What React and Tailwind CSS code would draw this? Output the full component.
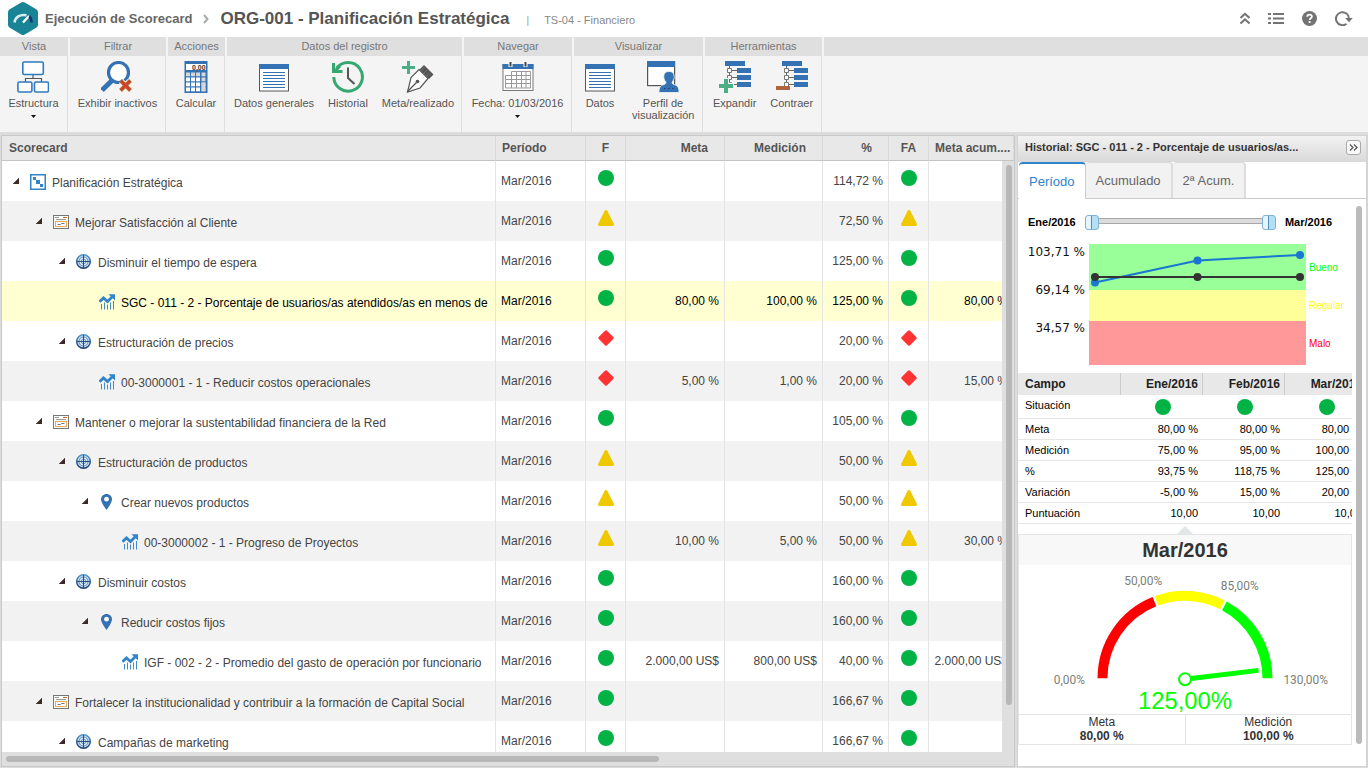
import { useState } from 'react';
import clsx from 'clsx';

/* ---------- Toolbar icons ---------- */

const StructureIcon = () => (
  <svg width="32" height="32" viewBox="0 0 32 32" fill="none">
    <path d="M16 14v4M8.500 21v-3.500h16V21" stroke="#555" strokeWidth="1.200" />
    <rect x="5.800" y="1" width="20.500" height="12.500" rx="1.500" fill="#fff" stroke="#2f7abf" strokeWidth="1.600" />
    <rect x="0.900" y="21" width="14" height="10" rx="1.500" fill="#fff" stroke="#2f7abf" strokeWidth="1.600" />
    <rect x="17.500" y="21" width="14" height="10" rx="1.500" fill="#fff" stroke="#2f7abf" strokeWidth="1.600" />
  </svg>
);

const InactiveIcon = () => (
  <svg width="32" height="32" viewBox="0 0 32 32" fill="none">
    <path d="M11 19.500 2.800 27.500" stroke="#3472b3" strokeWidth="5" strokeLinecap="square" />
    <circle cx="17.500" cy="11.500" r="10" fill="#fff" stroke="#3472b3" strokeWidth="3.200" />
    <path d="m20 20 9 9M29 20l-9 9" stroke="#fff" strokeWidth="6" />
    <path d="m19.500 19.500 10 10M29.500 19.500l-10 10" stroke="#b5632b" strokeWidth="4" />
    <path d="m20 20 9 9M29 20l-9 9" stroke="#d8382c" strokeWidth="1.600" />
  </svg>
);

const CalculatorIcon = () => (
  <svg width="32" height="32" viewBox="0 0 32 32">
    <path d="M4.500 0h23v32h-23z" fill="#3472b3" />
    <path d="M6 3h20v6H6z" fill="#fff" />
    <text x="12" y="8.500" fontSize="7" fontWeight="bold" fontFamily="Liberation Sans, sans-serif" fill="#333">0,00</text>
    {[11.500, 16.500, 21.500, 26.500].map((y, r) =>
      [6, 11, 16, 21.500].map((x) => (
        <rect key={`${x}-${y}`} x={x} y={y} width="4" height="3.800" fill={x === 21.500 || r === 0 ? '#d5d7da' : '#fff'} />
      ))
    )}
    <path d="M21.500 21.500h4v8.800h-4z" fill="#d5d7da" />
  </svg>
);

const FormIcon = () => (
  <svg width="32" height="32" viewBox="0 0 32 32">
    <rect x="1.500" y="4" width="29" height="26" fill="#fff" stroke="#555" />
    <path d="M1 3h30v5H1z" fill="#3472b3" />
    {[11, 14, 17, 20, 23, 26].map((y) => (
      <path key={y} d={`M5 ${y}h22v1H5z`} fill="#3472b3" />
    ))}
  </svg>
);

const HistoryIcon = () => (
  <svg width="34" height="32" viewBox="0 0 34 32" fill="none">
    <path d="M5.500 7.500A14.300 14.300 0 1 1 2.800 16" stroke="#35a871" strokeWidth="3" />
    <path d="M2.500 2v8.500h9" stroke="#35a871" strokeWidth="3" />
    <path d="M3 11 9 5" stroke="#35a871" strokeWidth="3" />
    <path d="M17 6.500V17l6.500 6" stroke="#555" strokeWidth="2" />
  </svg>
);

const PenIcon = () => (
  <svg width="32" height="32" viewBox="0 0 32 32" fill="none">
    <path d="M6.500 0v13M0 6.500h13" stroke="#4bae84" strokeWidth="3" />
    <path d="m17 8.500 9 9L18 27 5.500 31 9 16.500z" fill="#fff" stroke="#555" strokeWidth="1.200" />
    <path d="m5.500 30.500 9-9" stroke="#555" strokeWidth="1.200" />
    <circle cx="15.500" cy="20.500" r="1.800" fill="#555" />
    <path d="m17.500 8.500 4.500-4.500 9.500 9.500-4.500 4.500z" fill="#555" />
    <path d="m18.500 10 4-4m-1.500 7 4-4m-1.500 7 4-4" stroke="#777" strokeWidth=".8" />
  </svg>
);

const CalendarIcon = () => (
  <svg width="32" height="32" viewBox="0 0 32 32" fill="none">
    <rect x="1" y="3.500" width="30" height="26" fill="#fff" stroke="#777" />
    <path d="M.5 3h31v5H.5z" fill="#3472b3" />
    <path d="M8.500 1v5M23.500 1v5" stroke="#fff" strokeWidth="4" />
    <path d="M8.500 1v4.500M23.500 1v4.500" stroke="#444" strokeWidth="2" />
    <path d="M9.500 10.500h19v16.500h-25V14.500h25M3.500 18.500h25M3.500 22.500h25M9.500 10.500V27M14.500 10.500V27M19.500 10.500V27M24 10.500V27" stroke="#999" />
  </svg>
);

const ProfileIcon = () => (
  <svg width="32" height="32" viewBox="0 0 32 32">
    <rect x=".6" y=".6" width="27" height="24" fill="#fff" stroke="#555" strokeWidth="1.200" />
    <path d="M0 0h28v6H0z" fill="#3472b3" />
    <path d="M22 10.500c3.800 0 5.500 2.500 5.200 6-.2 2-1.200 3.500-2.200 4.800.2 1.500 1 2 3 2.600 2.600.8 4 2.400 4 7.600H12c0-5.200 1.400-6.800 4-7.600 2-.6 2.800-1.100 3-2.600-1-1.300-2-2.800-2.200-4.800-.3-3.500 1.400-6 5.200-6z" fill="#3472b3" stroke="#f4f4f4" strokeWidth=".8" />
    <path d="M17 27h1.500v1H17zM21 27h1.500v1H21zM25 27h1.500v1H25z" fill="#1d4676" />
  </svg>
);

const TreeIcon = ({ collapse }) => (
  <svg width="34" height="32" viewBox="0 0 34 32" fill="none">
    <path d="M11.500 5v18M13 9.500h8M13 16.500h8M13 23.500h8" stroke="#666" />
    <path d="M7 0h20v5H7zM19 7h14v5H19zM19 14h14v5H19zM19 21h14v5H19z" fill="#3472b3" />
    <path d="M9.500 7.500h4v4h-4zM9.500 14.500h4v4h-4zM9.500 21.500h4v4h-4z" fill="#fff" stroke="#777" />
    {collapse ? (
      <path d="M1 25h14v4H1z" fill="#b0633c" />
    ) : (
      <>
        <path d="M8 17v15.500M0 24.800h16" stroke="#f4f4f4" strokeWidth="6" />
        <path d="M8 18v14M1 25h14" stroke="#4bae84" strokeWidth="4" />
      </>
    )}
  </svg>
);

const ribbon = [
  { title: 'Vista', width: 'w-[68px]', items: [{ label: 'Estructura', icon: <StructureIcon />, menu: true }] },
  { title: 'Filtrar', width: 'w-24', items: [{ label: 'Exhibir inactivos', icon: <InactiveIcon /> }] },
  { title: 'Acciones', width: 'w-[57px]', items: [{ label: 'Calcular', icon: <CalculatorIcon /> }] },
  {
    title: 'Datos del registro',
    width: 'w-[235px]',
    items: [
      { label: 'Datos generales', icon: <FormIcon /> },
      { label: 'Historial', icon: <HistoryIcon /> },
      { label: 'Meta/realizado', icon: <PenIcon /> },
    ],
  },
  { title: 'Navegar', width: 'w-[108px]', items: [{ label: 'Fecha: 01/03/2016', icon: <CalendarIcon />, menu: true }] },
  {
    title: 'Visualizar',
    width: 'w-[129px]',
    items: [
      { label: 'Datos', icon: <FormIcon /> },
      { label: 'Perfil de visualización', icon: <ProfileIcon />, wrap: true },
    ],
  },
  {
    title: 'Herramientas',
    width: 'w-[117px]',
    items: [
      { label: 'Expandir', icon: <TreeIcon /> },
      { label: 'Contraer', icon: <TreeIcon collapse /> },
    ],
  },
];

/* ---------- Tree icons ---------- */

const nodeIcons = {
  plan: (
    <svg width="16" height="16" viewBox="0 0 16 16">
      <rect x=".75" y=".75" width="14.500" height="14.500" fill="#fff" stroke="#2f84cb" strokeWidth="1.500" />
      <path d="M3 3h3v3H3zM6 6h4v4H6zM10 10h3v3h-3z" fill="#2f84cb" />
    </svg>
  ),
  perspective: (
    <svg width="16" height="16" viewBox="0 0 16 16" fill="none">
      <rect x=".5" y="1.500" width="15" height="13" fill="#fff" stroke="#777" />
      <path d="M2 3.500h4M3 5.500h10" stroke="#999" />
      <path d="M10 3.500h4" stroke="#c0703a" />
      <rect x="2.500" y="7.500" width="11" height="5" fill="#fff" stroke="#eeaa5b" />
      <path d="M4.500 10.500h3l1-1h3" stroke="#777" />
    </svg>
  ),
  objective: (
    <svg width="16" height="16" viewBox="0 0 16 16" fill="none">
      <defs>
        <linearGradient id="target" x1="0" y1="0" x2="0" y2="1">
          <stop offset="0" stopColor="#5b9fd0" />
          <stop offset="1" stopColor="#1d3a78" />
        </linearGradient>
      </defs>
      <circle cx="7.500" cy="7.500" r="6.800" fill="#d4e8f4" stroke="url(#target)" strokeWidth="1.600" />
      <circle cx="7.500" cy="7.500" r="4.600" stroke="#5a86b5" />
      <circle cx="7.500" cy="7.500" r="2.300" stroke="#6c9cc4" />
      <path d="M7.500 1v13M1 7.500h13" stroke="#25508c" />
    </svg>
  ),
  initiative: (
    <svg width="16" height="16" viewBox="0 0 16 16">
      <path d="M7.500 0C10.500 0 13 2.300 13 5.300 13 9 7.500 16 7.500 16S2 9 2 5.300C2 2.300 4.500 0 7.500 0z" fill="#3472b3" />
      <circle cx="7.500" cy="5.200" r="2.400" fill="#fff" />
    </svg>
  ),
  indicator: (
    <svg width="16" height="16" viewBox="0 0 16 16" fill="none">
      <path d="M.5 7.800 4.500 4l4 3.500L13 3" stroke="#2f84cb" strokeWidth="2.800" />
      <path d="M9.500.3H16v6.200z" fill="#2f84cb" />
      <path d="M2.500 10v5.500M5.500 8.500v7M8.500 10.500v5M11.500 8.500v7M14.500 7v8.500" stroke="#3f8ccc" />
    </svg>
  ),
};

const Status = ({ value }) => (
  <svg width="16" height="16" viewBox="0 0 16 16" className="inline-block align-top" role="img" aria-label={value}>
    {value === 'green' && <circle cx="8" cy="8" r="8" fill="#00b344" />}
    {value === 'yellow' && (
      <path d="M8 1.500 14.500 14.500H1.500z" fill="#f0c800" stroke="#f0c800" strokeWidth="3" strokeLinejoin="round" />
    )}
    {value === 'red' && (
      <path d="M8 1.800 14.200 8 8 14.200 1.800 8z" fill="#ff3333" stroke="#ff3333" strokeWidth="3" strokeLinejoin="round" />
    )}
  </svg>
);

const rows = [
  { level: 0, icon: 'plan', name: 'Planificación Estratégica', status: 'green', pct: '114,72 %' },
  { level: 1, icon: 'perspective', name: 'Mejorar Satisfacción al Cliente', status: 'yellow', pct: '72,50 %' },
  { level: 2, icon: 'objective', name: 'Disminuir el tiempo de espera', status: 'green', pct: '125,00 %' },
  { level: 3, icon: 'indicator', name: 'SGC - 011 - 2 - Porcentaje de usuarios/as atendidos/as en menos de', status: 'green', meta: '80,00 %', med: '100,00 %', pct: '125,00 %', acum: '80,00 %', selected: true },
  { level: 2, icon: 'objective', name: 'Estructuración de precios', status: 'red', pct: '20,00 %' },
  { level: 3, icon: 'indicator', name: '00-3000001 - 1 - Reducir costos operacionales', status: 'red', meta: '5,00 %', med: '1,00 %', pct: '20,00 %', acum: '15,00 %' },
  { level: 1, icon: 'perspective', name: 'Mantener o mejorar la sustentabilidad financiera de la Red', status: 'green', pct: '105,00 %' },
  { level: 2, icon: 'objective', name: 'Estructuración de productos', status: 'yellow', pct: '50,00 %' },
  { level: 3, icon: 'initiative', name: 'Crear nuevos productos', status: 'yellow', pct: '50,00 %' },
  { level: 4, icon: 'indicator', name: '00-3000002 - 1 - Progreso de Proyectos', status: 'yellow', meta: '10,00 %', med: '5,00 %', pct: '50,00 %', acum: '30,00 %' },
  { level: 2, icon: 'objective', name: 'Disminuir costos', status: 'green', pct: '160,00 %' },
  { level: 3, icon: 'initiative', name: 'Reducir costos fijos', status: 'green', pct: '160,00 %' },
  { level: 4, icon: 'indicator', name: 'IGF - 002 - 2 - Promedio del gasto de operación por funcionario', status: 'green', meta: '2.000,00 US$', med: '800,00 US$', pct: '40,00 %', acum: '2.000,00 US$' },
  { level: 1, icon: 'perspective', name: 'Fortalecer la institucionalidad y contribuir a la formación de Capital Social', status: 'green', pct: '166,67 %' },
  { level: 2, icon: 'objective', name: 'Campañas de marketing', status: 'green', pct: '166,67 %' },
];

const history = [
  ['Meta', '80,00 %', '80,00 %', '80,00 %'],
  ['Medición', '75,00 %', '95,00 %', '100,00 %'],
  ['%', '93,75 %', '118,75 %', '125,00 %'],
  ['Variación', '-5,00 %', '15,00 %', '20,00 %'],
  ['Puntuación', '10,00', '10,00', '10,00'],
];

const Header = () => (
  <header className="flex h-[37px] shrink-0 items-center bg-white pl-2 pr-[15px] text-[#666]">
    <svg width="30" height="33" viewBox="0 0 30 33" fill="none">
      <path d="M13.200.6a3.600 3.600 0 0 1 3.600 0l11.400 6.600A3.600 3.600 0 0 1 30 10.300v12.400a3.600 3.600 0 0 1-1.800 3.100l-11.400 6.600a3.600 3.600 0 0 1-3.600 0L1.800 25.800A3.600 3.600 0 0 1 0 22.700V10.300a3.600 3.600 0 0 1 1.800-3.100z" fill="#188496" />
      <path d="M6.500 20.500c.8-5.500 5.200-8.500 12-7.300" stroke="#d6edf0" strokeWidth="2.600" />
      <path d="m15 20.500 6-6.500" stroke="#fff" strokeWidth="2.400" />
      <path d="M21.300 14.300c1.400 1.300 2.200 3.400 2.300 6.200" stroke="#1d3370" strokeWidth="2.600" />
    </svg>
    <a href="#scorecard" className="ml-[7px] text-[13px] font-bold">Ejecución de Scorecard</a>
    <svg width="6" height="10" viewBox="0 0 6 10" fill="none" className="mx-[11px]">
      <path d="m1 1 3.500 4L1 9" stroke="#aaa" strokeWidth="2" />
    </svg>
    <h1 className="text-[17px] font-bold text-[#555]">ORG-001 - Planificación Estratégica</h1>
    <span className="ml-[17px] pt-1 text-[10px] text-[#999]">|</span>
    <span className="ml-[15px] pt-1 text-[11px] text-[#888]">TS-04 - Financiero</span>
    <div className="ml-auto flex items-center gap-[18px] text-[#737373]">
      <button type="button" aria-label="Ocultar">
        <svg width="10" height="13" viewBox="0 0 10 13" fill="none" stroke="currentColor" strokeWidth="2">
          <path d="M.5 6 5 1.800 9.500 6M.5 11.500 5 7.300l4.500 4.200" />
        </svg>
      </button>
      <button type="button" aria-label="Lista">
        <svg width="16" height="11" viewBox="0 0 16 11" fill="currentColor">
          <path d="M0 0h3v2H0zM5 0h11v2H5zM0 4.500h3v2H0zM5 4.500h11v2H5zM0 9h3v2H0zM5 9h11v2H5z" />
        </svg>
      </button>
      <button type="button" aria-label="Ayuda">
        <svg width="15" height="15" viewBox="0 0 15 15" fill="none">
          <circle cx="7.500" cy="7.500" r="7.500" fill="currentColor" />
          <path d="M5.200 5.800C5.200 4.300 6.200 3.600 7.500 3.600s2.400.8 2.400 2c0 1.600-2.300 1.700-2.300 3.400" stroke="#fff" strokeWidth="1.800" />
          <path d="M6.600 10.200h2V12h-2z" fill="#fff" />
        </svg>
      </button>
      <button type="button" aria-label="Actualizar">
        <svg width="18" height="15" viewBox="0 0 18 15" fill="none">
          <path d="M11.500 12.800A6.500 6.500 0 1 1 14 7.500" stroke="currentColor" strokeWidth="2" />
          <path d="M10.200 7h7.600L14 11.300z" fill="currentColor" />
        </svg>
      </button>
    </div>
  </header>
);

const Ribbon = () => (
  <nav className="flex h-[98px] shrink-0 gap-[2px] border-b-[3px] border-[#dcdcdc] bg-[#f4f4f4]">
    {ribbon.map((group) => (
      <section key={group.title} className={clsx('flex shrink-0 flex-col', group.width)}>
        <h2 className="h-[19px] bg-[#dfdfdf] text-center text-[11px] leading-[19px] text-[#777]">{group.title}</h2>
        <div className="flex flex-1 justify-center border-r border-[#dfdfdf]">
          {group.items.map((item) => (
            <button
              key={item.label}
              type="button"
              className="flex min-w-[50px] flex-col items-center px-[7px] pt-[5px] text-[11px] leading-3 text-[#555]"
            >
              {item.icon}
              <span className={clsx('mt-1', item.wrap ? 'w-[62px]' : 'whitespace-nowrap')}>{item.label}</span>
              {item.menu && (
                <svg width="5" height="3" viewBox="0 0 5 3" className="mt-[6px]">
                  <path d="M0 0h5L2.500 3z" fill="#111" />
                </svg>
              )}
            </button>
          ))}
        </div>
      </section>
    ))}
    <div className="h-[19px] flex-1 bg-[#dfdfdf]" />
  </nav>
);

const ScorecardTable = () => (
  <main className="flex min-w-0 flex-1 flex-col border border-[#c8c8c8] bg-[#dfdfdf]">
    <div className="relative min-h-0 flex-1 overflow-hidden bg-white">
      <table className="w-full table-fixed border-separate border-spacing-0 text-xs text-[#444]">
        <colgroup>
          <col />
          <col className="w-[90px]" />
          <col className="w-10" />
          <col className="w-[99px]" />
          <col className="w-[98px]" />
          <col className="w-[66px]" />
          <col className="w-10" />
          <col className="w-[85px]" />
        </colgroup>
        <thead>
          <tr className="h-[25px] bg-[#e8e8e8] text-[#555] [&>th]:border-b [&>th]:border-r [&>th]:border-b-[#c4c4c4] [&>th]:border-r-[#dadada]">
            <th className="pl-[7px] text-left">Scorecard</th>
            <th className="pl-[6px] text-left">Período</th>
            <th className="text-center">F</th>
            <th className="pr-4 text-right">Meta</th>
            <th className="pr-4 text-right">Medición</th>
            <th className="pr-4 text-right">%</th>
            <th className="text-center">FA</th>
            <th className="whitespace-nowrap pl-[6px] text-left">Meta acum....</th>
          </tr>
        </thead>
        <tbody>
          {rows.map((row) => (
            <tr
              key={row.name}
              className={clsx(
                'h-10 [&>td]:border-r [&>td]:border-[#e4e4e4]',
                row.selected ? 'bg-[#ffffd2] text-black' : 'even:bg-[#f2f2f2]'
              )}
            >
              <td className="overflow-hidden whitespace-nowrap pt-[2px]">
                <div className="flex items-center" style={{ paddingLeft: 11 + row.level * 23 }}>
                  <span className="w-[17px] shrink-0 pb-[2px]">
                    {row.icon !== 'indicator' && (
                      <svg width="6" height="6" viewBox="0 0 6 6">
                        <path d="M6 0v6H0z" fill="#3b2b28" stroke="#3b2b28" strokeWidth=".5" />
                      </svg>
                    )}
                  </span>
                  <span className="mr-[6px] shrink-0">{nodeIcons[row.icon]}</span>
                  <span className="pt-[2px]">{row.name}</span>
                </div>
              </td>
              <td className="pl-[5px]">Mar/2016</td>
              <td className="pb-[6px] text-center"><Status value={row.status} /></td>
              <td className="pr-[5px] text-right">{row.meta}</td>
              <td className="pr-[5px] text-right">{row.med}</td>
              <td className="pr-[5px] text-right">{row.pct}</td>
              <td className="pb-[6px] text-center"><Status value={row.status} /></td>
              <td className="whitespace-nowrap pl-1 pr-[5px] text-right">{row.acum}</td>
            </tr>
          ))}
        </tbody>
      </table>
      <div className="absolute bottom-0 right-0 top-[25px] w-3 bg-[#dfdfdf] pl-1 pr-[2px] pt-1">
        <div className="h-[92%] rounded-full bg-[#b8b8b8]" />
      </div>
    </div>
    <div className="h-[14px] shrink-0 px-1 pt-1">
      <div className="h-[6px] w-[65%] rounded-full bg-[#b8b8b8]" />
    </div>
  </main>
);

const thumb =
  'pointer-events-none absolute inset-0 m-0 h-4 w-full appearance-none bg-transparent [&::-webkit-slider-thumb]:pointer-events-auto [&::-webkit-slider-thumb]:h-[15px] [&::-webkit-slider-thumb]:w-[14px] [&::-webkit-slider-thumb]:appearance-none [&::-webkit-slider-thumb]:rounded-[3px] [&::-webkit-slider-thumb]:border [&::-webkit-slider-thumb]:border-[#7fb3d5] [&::-webkit-slider-thumb]:bg-[linear-gradient(90deg,#e4f5fd_0_5px,#4f8fb8_5px_6px,#b5dff3_6px)]';

const PeriodSlider = () => {
  const [from, setFrom] = useState(0);
  const [to, setTo] = useState(2);
  return (
    <div className="flex items-center pl-[10px] pr-5 text-[11px] font-bold text-black">
      <label htmlFor="from">Ene/2016</label>
      <div className="relative mx-[9px] h-4 flex-1">
        <div className="mx-2 mt-1 h-[6px] border-y border-[#a8a8a8] bg-[#dcdcdc]" />
        <input id="from" type="range" min="0" max="2" value={from} onChange={(e) => setFrom(Math.min(+e.target.value, to))} className={thumb} />
        <input id="to" type="range" min="0" max="2" value={to} onChange={(e) => setTo(Math.max(+e.target.value, from))} className={thumb} />
      </div>
      <label htmlFor="to">Mar/2016</label>
    </div>
  );
};

const TrendChart = () => (
  <svg viewBox="0 0 334 122" className="mt-[13px] block w-full">
    <path d="M71 0h217v46H71z" fill="#99ff99" />
    <path d="M71 46h217v31H71z" fill="#ffff99" />
    <path d="M71 77h217v44H71z" fill="#ff9999" />
    <g fontSize="12" fontFamily="DejaVu Sans, sans-serif" fill="#111" textAnchor="end">
      <text x="67" y="12">103,71 %</text>
      <text x="67" y="50">69,14 %</text>
      <text x="67" y="88">34,57 %</text>
    </g>
    <g fontSize="10">
      <text x="291" y="27" fill="#00ff00">Bueno</text>
      <text x="291" y="65" fill="#ffff00">Regular</text>
      <text x="291" y="103" fill="#ff0000">Malo</text>
    </g>
    <g fill="#1976d2">
      <path d="M77 38.500 179.500 16.500 282 11" fill="none" stroke="#1976d2" strokeWidth="2" />
      <circle cx="77" cy="38.500" r="4" />
      <circle cx="179.500" cy="16.500" r="4" />
      <circle cx="282" cy="11" r="4" />
    </g>
    <g fill="#333">
      <path d="M77 33h205" stroke="#333" strokeWidth="2" />
      <circle cx="77" cy="33" r="4" />
      <circle cx="179.500" cy="33" r="4" />
      <circle cx="282" cy="33" r="4" />
    </g>
  </svg>
);

const HistoryTable = () => (
  <div className="mt-[7px] overflow-hidden">
    <table className="w-[349px] table-fixed border-separate border-spacing-0 text-[11px] text-black">
      <colgroup>
        <col className="w-[103px]" />
        <col className="w-[82px]" />
        <col className="w-[82px]" />
        <col className="w-[82px]" />
      </colgroup>
      <thead>
        <tr className="h-[22px] bg-[#e8e8e8] text-right text-xs text-[#222] [&>th]:border-r [&>th]:border-[#ccc] [&>th]:pr-1">
          <th className="pl-[7px] text-left">Campo</th>
          <th>Ene/2016</th>
          <th>Feb/2016</th>
          <th>Mar/2016</th>
        </tr>
      </thead>
      <tbody className="[&_td]:border-b [&_td]:border-[#e6e6e6]">
        <tr className="h-6">
          <td className="pb-[2px] pl-[7px]">Situación</td>
          {[0, 1, 2].map((i) => (
            <td key={i} className="pl-[2px] pt-[2px] text-center"><Status value="green" /></td>
          ))}
        </tr>
        {history.map(([field, ...values]) => (
          <tr key={field} className="h-[21px]">
            <td className="pl-[7px] pt-px">{field}</td>
            {values.map((value, i) => (
              <td key={i} className="pr-[5px] pt-px text-right">{value}</td>
            ))}
          </tr>
        ))}
      </tbody>
    </table>
  </div>
);

// Point on the dial for a 0-130 value
const polar = (value, r) => {
  const a = Math.PI * (1 - value / 130);
  return `${167 + r * Math.cos(a)} ${114 - r * Math.sin(a)}`;
};

const arc = (from, to) => `M${polar(from, 83)}A83 83 0 0 1 ${polar(to, 83)}`;

const Gauge = () => (
  <section className="mt-[2px]">
    <svg width="16" height="8" viewBox="0 0 16 8" className="mx-auto block">
      <path d="M8 0l8 8H0z" fill="#e3e6e6" />
    </svg>
    <div className="border border-[#e3e6e6]">
      <h3 className="h-[30px] bg-[#f8f8f8] text-center text-xl font-bold leading-[30px] text-[#333]">Mar/2016</h3>
      <svg viewBox="0 0 334 150" className="block w-full">
        <g fill="none" strokeWidth="10">
          <path d={arc(0, 49.300)} stroke="#ff0000" />
          <path d={arc(50.400, 84.500)} stroke="#ffff00" />
          <path d={arc(85.600, 130)} stroke="#00ff00" />
        </g>
        <path d="m171 114.500 70-8.500" stroke="#00ff00" strokeWidth="5" />
        <circle cx="167" cy="115" r="6" fill="#fff" stroke="#00ff00" strokeWidth="2" />
        <g fontSize="12" fontFamily="Roboto, sans-serif" fill="#7d8078">
          <text x="35" y="120">0,00%</text>
          <text x="106" y="20">50,00%</text>
          <text x="203" y="25">85,00%</text>
          <text x="266" y="120">130,00%</text>
        </g>
        <text x="167" y="145" fontSize="24" textAnchor="middle" fill="#00ff00">125,00%</text>
      </svg>
      <dl className="flex h-[30px] border-t border-[#e3e6e6] text-center text-xs leading-[14px] text-[#333]">
        <div className="flex-1 border-r border-[#e3e6e6]">
          <dt>Meta</dt>
          <dd className="font-bold">80,00 %</dd>
        </div>
        <div className="flex-1">
          <dt>Medición</dt>
          <dd className="font-bold">100,00 %</dd>
        </div>
      </dl>
    </div>
  </section>
);

const HistoryPanel = () => {
  const [tab, setTab] = useState('Período');
  return (
    <aside className="flex w-[351px] shrink-0 flex-col border-l border-r-2 border-t border-b border-[#d4d4d4] bg-white">
      <div className="flex h-[26px] shrink-0 items-center justify-between bg-linear-to-b from-[#f2f2f2] to-[#d9d9d9] pb-[3px] pl-[7px] pr-[5px]">
        <h2 className="text-[11px] font-bold text-[#333]">Historial: SGC - 011 - 2 - Porcentaje de usuarios/as...</h2>
        <button type="button" aria-label="Contraer panel" className="flex size-[15px] items-center justify-center rounded-[3px] border border-[#aaa] bg-[#f8f8f8]">
          <svg width="9" height="7" viewBox="0 0 9 7" fill="none" stroke="#555" strokeWidth="1.200">
            <path d="m1 .5 3 3-3 3M5 .5l3 3-3 3" />
          </svg>
        </button>
      </div>
      <div className="flex h-[37px] shrink-0 items-end border-b border-[#ccc] pl-px" role="tablist">
        {['Período', 'Acumulado', '2ª Acum.'].map((name) => (
          <button
            key={name}
            type="button"
            role="tab"
            aria-selected={tab === name}
            onClick={() => setTab(name)}
            className={clsx(
              'rounded-t px-[10px] text-[13px]',
              tab === name
                ? '-mb-px h-[37px] border-r border-t-2 border-r-[#ccc] border-t-[#2f84cb] bg-white text-[#2f84cb]'
                : 'h-9 border-r-2 border-t border-[#dcdcdc] bg-[#f2f2f2] text-[#666]'
            )}
          >
            {name}
          </button>
        ))}
      </div>
      <div className="flex min-h-0 flex-1">
        <div className="min-w-0 flex-1 pt-[15px]">
          <PeriodSlider />
          <TrendChart />
          <HistoryTable />
          <Gauge />
        </div>
        <div className="w-[14px] shrink-0 px-1 pb-[22px] pt-[7px]">
          <div className="h-full rounded-full bg-[#bbb]" />
        </div>
      </div>
    </aside>
  );
};

export default function App() {
  return (
    <div className="flex h-screen flex-col overflow-hidden bg-[#dcdcdc] font-['Liberation_Sans',Arial,sans-serif]">
      <Header />
      <Ribbon />
      <div className="flex min-h-0 flex-1 gap-[2px] pb-px pl-px">
        <ScorecardTable />
        <HistoryPanel />
      </div>
    </div>
  );
}
